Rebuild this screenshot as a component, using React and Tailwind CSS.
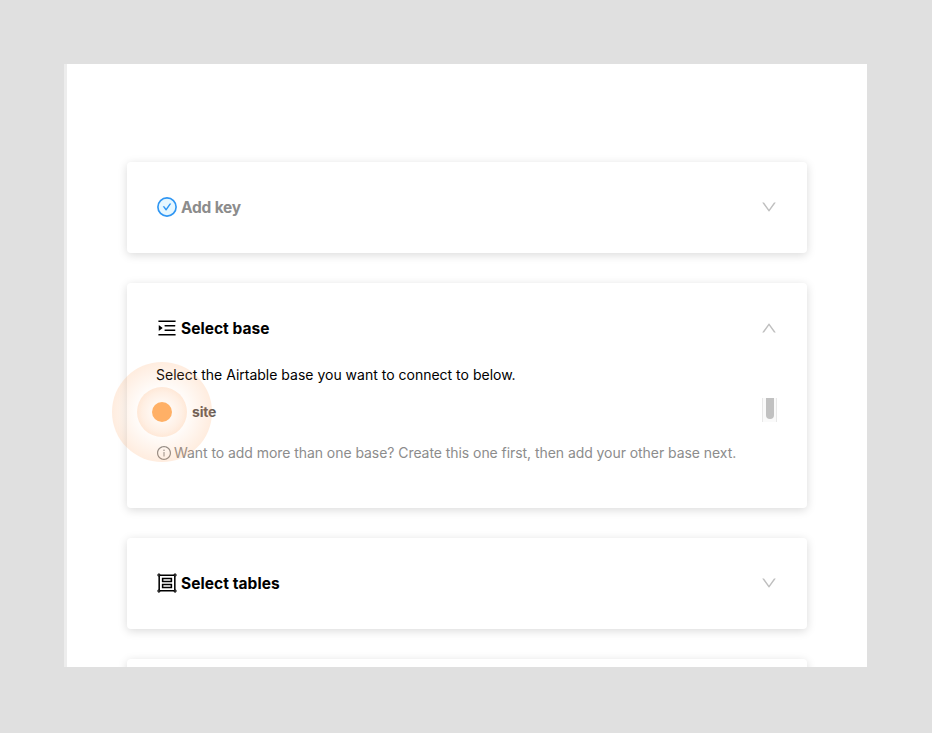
import {
  AiOutlineMenuUnfold,
  AiOutlineGroup,
  AiOutlineInfoCircle,
  AiOutlineDown,
  AiOutlineUp,
} from "react-icons/ai";

function CheckIcon() {
  return (
    <svg viewBox="0 0 1024 1024" className="size-[22px]">
      <circle cx="512" cy="512" r="424" fill="#e6f7ff" stroke="#2f96f3" strokeWidth="76" />
      <path
        fill="#2f96f3"
        d="M699 353h-46.900c-10.200 0-19.900 4.900-25.900 13.300L469 584.300l-71.200-98.800c-6-8.300-15.600-13.300-25.900-13.300H325c-6.500 0-10.300 7.400-6.500 12.700l124.600 172.800a31.800 31.800 0 0 0 51.700 0l210.600-292c3.900-5.300.1-12.700-6.400-12.700z"
      />
    </svg>
  );
}

function Panel({ icon, title, titleClass, open, className, children }) {
  const Chevron = open ? AiOutlineUp : AiOutlineDown;
  return (
    <section
      className={`shrink-0 rounded bg-white px-[29px] shadow-[0_2px_10px_rgba(0,0,0,0.15)] ${className}`}
    >
      <header className="flex h-[90px] items-center">
        <span className="flex size-[22px] shrink-0 items-center justify-center">{icon}</span>
        <h2 className={`ml-[3px] grow pt-[2px] text-[15.5px] font-bold leading-6 ${titleClass}`}>{title}</h2>
        <Chevron className="size-[18px] shrink-0 text-[#bfbfbf]" />
      </header>
      {children}
    </section>
  );
}

export default function App() {
  return (
    <div className="h-[733px] w-[932px] overflow-hidden bg-[#e0e0e0] pl-16 pt-16 font-['Inter',sans-serif]">
      <main className="flex h-[603px] w-[803px] flex-col gap-[30px] overflow-hidden border-l-[3px] border-[#ededed] bg-white pl-[60px] pr-[60px] pt-[98px]">
        <Panel
          className="h-[91px]"
          icon={<CheckIcon />}
          title="Add key"
          titleClass="tracking-[-0.2px] text-[#8c8c8c]"
        />
        <Panel
          className="h-[225px]"
          open
          icon={<AiOutlineMenuUnfold className="size-[22px]" />}
          title="Select base"
          titleClass="tracking-[0.03px] text-black"
        >
          <p className="-mt-[9px] whitespace-nowrap text-sm leading-[22px] text-black">
            Select the Airtable base you want to connect to below.
          </p>
          <div className="mt-[12px] flex h-6 items-start">
            <span className="relative -ml-1 mt-1 size-5 shrink-0">
              <span className="absolute -left-[40px] -top-[40px] size-[100px] rounded-full bg-[radial-gradient(circle_closest-side,rgba(255,153,77,0)_40%,rgba(255,153,77,0.18)_100%)]" />
              <span className="absolute -left-[15px] -top-[15px] size-[50px] rounded-full bg-[radial-gradient(circle_closest-side,rgba(255,153,77,0.05)_30%,rgba(255,153,77,0.2)_100%)]" />
              <span className="absolute left-0 top-0 size-5 rounded-full bg-[#ffb066]" />
            </span>
            <span className="ml-5 mt-[3px] grow text-sm font-bold leading-[22px] tracking-[-0.2px] text-[#665c57]">site</span>
            <span className="mr-px flex h-6 w-[15px] justify-center border-x border-[#e8e8e8] bg-[#fafafa]">
              <span className="h-[21px] w-2 rounded-b-full bg-[#c1c1c1]" />
            </span>
          </div>
          <p className="mt-[20px] flex items-center whitespace-nowrap text-sm leading-[22px] tracking-[-0.06px] text-[#8c8c8c]">
            <AiOutlineInfoCircle className="mr-[2px] size-4" />
            <span>Want to add more than one base? Create this one first, then add your other base next.</span>
          </p>
        </Panel>
        <Panel
          className="h-[91px]"
          icon={<AiOutlineGroup className="size-[22px]" />}
          title="Select tables"
          titleClass="tracking-[0.06px] text-black"
        />
        <Panel className="h-[91px]" title="" titleClass="" />
      </main>
    </div>
  );
}
